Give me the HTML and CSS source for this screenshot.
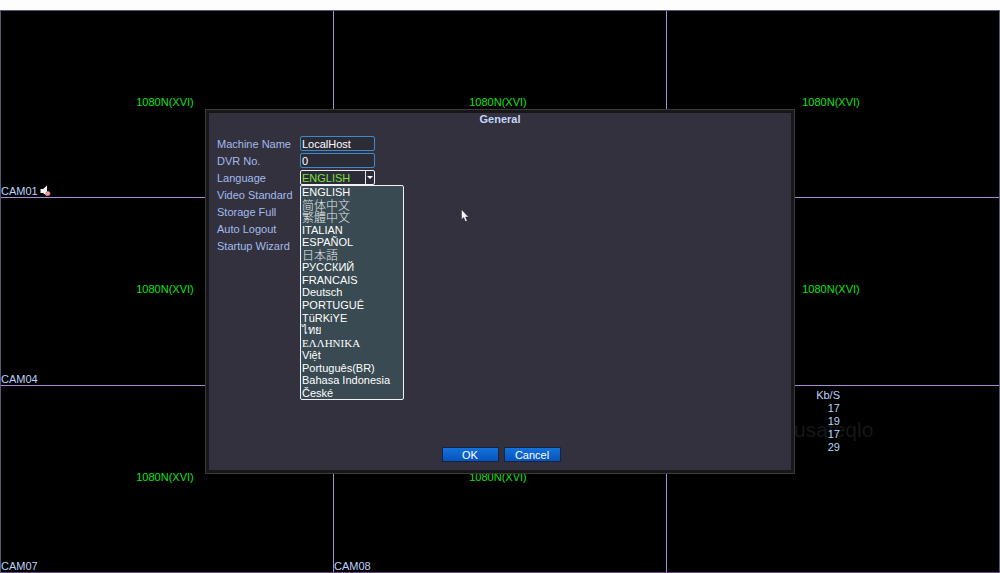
FILE: index.html
```html
<!DOCTYPE html>
<html lang="en">
<head>
    <meta charset="UTF-8">
    <meta name="viewport" content="width=device-width, initial-scale=1.0">
    <title>General</title>
    <link rel="stylesheet" href="styles.css">
</head>
<body>
    <main class="screen">
        <!-- Camera wall -->
        <div class="cameras">
            <section class="camera">
                <span class="camera-mode">1080N(XVI)</span>
                <div class="camera-name">
                    CAM01
                    <svg class="mute-icon" viewBox="0 0 12 12" aria-hidden="true">
                        <path d="M0.500 4h2.500L7 0.500v10.500L3 8H0.500z" fill="#f1f3f4"/>
                        <circle cx="8" cy="8.500" r="2" fill="#f3c9c9" stroke="#d9686c"/>
                        <path d="M7 7.500l2 2" stroke="#d9686c"/>
                    </svg>
                </div>
            </section>
            <section class="camera">
                <span class="camera-mode">1080N(XVI)</span>
                <div class="camera-name"></div>
            </section>
            <section class="camera">
                <span class="camera-mode">1080N(XVI)</span>
                <div class="camera-name"></div>
            </section>
            <section class="camera">
                <span class="camera-mode">1080N(XVI)</span>
                <div class="camera-name">CAM04</div>
            </section>
            <section class="camera"></section>
            <section class="camera">
                <span class="camera-mode">1080N(XVI)</span>
                <div class="camera-name"></div>
            </section>
            <section class="camera">
                <span class="camera-mode">1080N(XVI)</span>
                <div class="camera-name">CAM07</div>
            </section>
            <section class="camera">
                <span class="camera-mode">1080N(XVI)</span>
                <div class="camera-name">CAM08</div>
            </section>
            <section class="camera">
                <span class="watermark">usafeqlo</span>
                <table class="traffic">
                    <thead>
                        <tr><th>Kb/S</th></tr>
                    </thead>
                    <tbody>
                        <tr><td>17</td></tr>
                        <tr><td>19</td></tr>
                        <tr><td>17</td></tr>
                        <tr><td>29</td></tr>
                    </tbody>
                </table>
            </section>
        </div>

        <!-- General settings -->
        <div class="overlay">
            <form class="dialog" role="dialog" aria-labelledby="dialog-title">
                <h1 class="dialog-title" id="dialog-title">General</h1>
                <div class="fields">
                    <div class="field">
                        <label class="field-label" for="machine-name">Machine Name</label>
                        <input class="control" id="machine-name" type="text" value="LocalHost">
                    </div>
                    <div class="field">
                        <label class="field-label" for="dvr-no">DVR No.</label>
                        <input class="control" id="dvr-no" type="text" value="0">
                    </div>
                    <div class="field">
                        <label class="field-label" for="language">Language</label>
                        <div class="dropdown">
                            <select class="control control-select" id="language">
                                <option>ENGLISH</option>
                            </select>
                            <svg class="dropdown-arrow" viewBox="0 0 9 13" aria-hidden="true">
                                <path d="M0.500 0v13" stroke="#e8e8f0"/>
                                <path d="M2 5h6L5 8z" fill="#fff"/>
                            </svg>
                            <ul class="menu" role="listbox" aria-label="Language">
                                <li role="option" aria-selected="true">ENGLISH</li>
                                <li role="option" class="cjk" lang="zh-Hans">简体中文</li>
                                <li role="option" class="cjk" lang="zh-Hant">繁體中文</li>
                                <li role="option">ITALIAN</li>
                                <li role="option">ESPAÑOL</li>
                                <li role="option" class="cjk" lang="ja">日本語</li>
                                <li role="option">РУССКИЙ</li>
                                <li role="option">FRANCAIS</li>
                                <li role="option">Deutsch</li>
                                <li role="option">PORTUGUÊ</li>
                                <li role="option">TüRKiYE</li>
                                <li role="option" class="serif">ไทย</li>
                                <li role="option" class="serif">ΕΛΛΗΝΙΚΑ</li>
                                <li role="option">Việt</li>
                                <li role="option">Português(BR)</li>
                                <li role="option">Bahasa Indonesia</li>
                                <li role="option">České</li>
                            </ul>
                        </div>
                    </div>
                    <div class="field"><span class="field-label">Video Standard</span></div>
                    <div class="field"><span class="field-label">Storage Full</span></div>
                    <div class="field"><span class="field-label">Auto Logout</span></div>
                    <div class="field"><span class="field-label">Startup Wizard</span></div>
                </div>
                <div class="dialog-actions">
                    <button class="btn" type="button">OK</button>
                    <button class="btn" type="button">Cancel</button>
                </div>
            </form>
        </div>

        <svg class="pointer" viewBox="0 0 8 13" aria-hidden="true">
            <path d="M0.500 0.500v10l2.200-2 1.700 4 1.800-0.800-1.700-3.700h3z" fill="#fff" stroke="#22222a" stroke-width="0.500"/>
        </svg>
    </main>
</body>
</html>
```
FILE: styles.css
```css
* {
    box-sizing: border-box;
}

body {
    margin: 0;
    padding-top: 10px;
    min-height: 100vh;
    display: flex;
    background: #fdfdfd;
    color: #bcd3fb;
    font-family: "Liberation Sans", Arial, "Noto Sans CJK SC", sans-serif;
    font-size: 11px;
    line-height: 12px;
}

.screen {
    position: relative;
    flex: 1;
    display: flex;
}

/* Camera wall */
.cameras {
    flex: 1;
    display: grid;
    grid-template-columns: repeat(3, 1fr);
    grid-template-rows: repeat(3, 1fr);
    gap: 1px;
    background: #ac8cd0;
    border: 1px solid #595874;
    border-bottom-color: #68487e;
}

.camera {
    position: relative;
    display: flex;
    flex-direction: column;
    background: #000;
}

.camera-mode {
    flex: 1;
    display: flex;
    align-items: center;
    justify-content: center;
    padding: 8px 4px 0 0;
    color: #14e01c;
}

.camera-name {
    display: flex;
    align-items: center;
    gap: 2px;
    height: 12px;
}

.mute-icon {
    width: 12px;
    height: 12px;
}

.traffic {
    position: relative;
    width: 173px;
    margin-top: 3px;
    border-collapse: collapse;
    text-align: right;
}

.traffic th,
.traffic td {
    padding: 0;
    font-weight: normal;
    line-height: 13px;
}

.watermark {
    position: absolute;
    top: 32px;
    left: 127px;
    color: #171717;
    font-size: 21px;
    line-height: 24px;
}

/* Dialog */
.overlay {
    position: absolute;
    inset: 0;
    display: flex;
    align-items: center;
    justify-content: center;
}

.dialog {
    width: 59%;
    min-height: 365px;
    display: flex;
    flex-direction: column;
    padding: 0 8px 8px;
    background: #32313d;
    border: 4px solid #17171a;
    outline: 1px solid #3b3b3e;
    outline-offset: -1px;
}

.dialog-title {
    margin: 0 0 11px;
    font-size: 11px;
    line-height: 12px;
    text-align: center;
    color: #c6d6fa;
}

.fields {
    display: flex;
    flex-direction: column;
    gap: 2px;
}

.field {
    display: flex;
    align-items: center;
    height: 15px;
}

.field-label {
    width: 83px;
    color: #a3bbee;
}

.control {
    display: block;
    width: 75px;
    height: 15px;
    margin: 0;
    padding: 0 1px;
    background: #2c2c38;
    border: 1px solid #3d8ac4;
    border-radius: 2px;
    color: #fff;
    font: inherit;
}

.control-select {
    appearance: none;
    border-color: #f0f0f6;
    color: #7be03c;
}

.dropdown {
    position: relative;
}

.dropdown-arrow {
    position: absolute;
    top: 1px;
    right: 1px;
    width: 9px;
    height: 13px;
    pointer-events: none;
}

.menu {
    position: absolute;
    top: 15px;
    left: 0;
    width: 104px;
    height: 215px;
    margin: 0;
    padding: 0 1px;
    display: grid;
    grid-auto-rows: 1fr;
    align-items: center;
    list-style: none;
    background: #394a52;
    border: 1px solid #f0f0f6;
    border-radius: 2px;
    color: #fff;
    white-space: nowrap;
}

.menu .cjk {
    font-family: "Noto Sans CJK SC", sans-serif;
    font-size: 12px;
    font-weight: 300;
    color: #e6ebed;
}

.menu .serif {
    font-family: "Liberation Serif", "Times New Roman", serif;
}

.dialog-actions {
    display: flex;
    justify-content: center;
    gap: 5px;
    margin-top: auto;
    padding-left: 2px;
}

.btn {
    width: 57px;
    height: 15px;
    padding: 0;
    background: linear-gradient(#1473dc, #0753bd);
    border: 1px solid #14233f;
    color: #fff;
    font: inherit;
}

.pointer {
    position: absolute;
    top: 199px;
    left: 461px;
    width: 8px;
    height: 13px;
}
```
